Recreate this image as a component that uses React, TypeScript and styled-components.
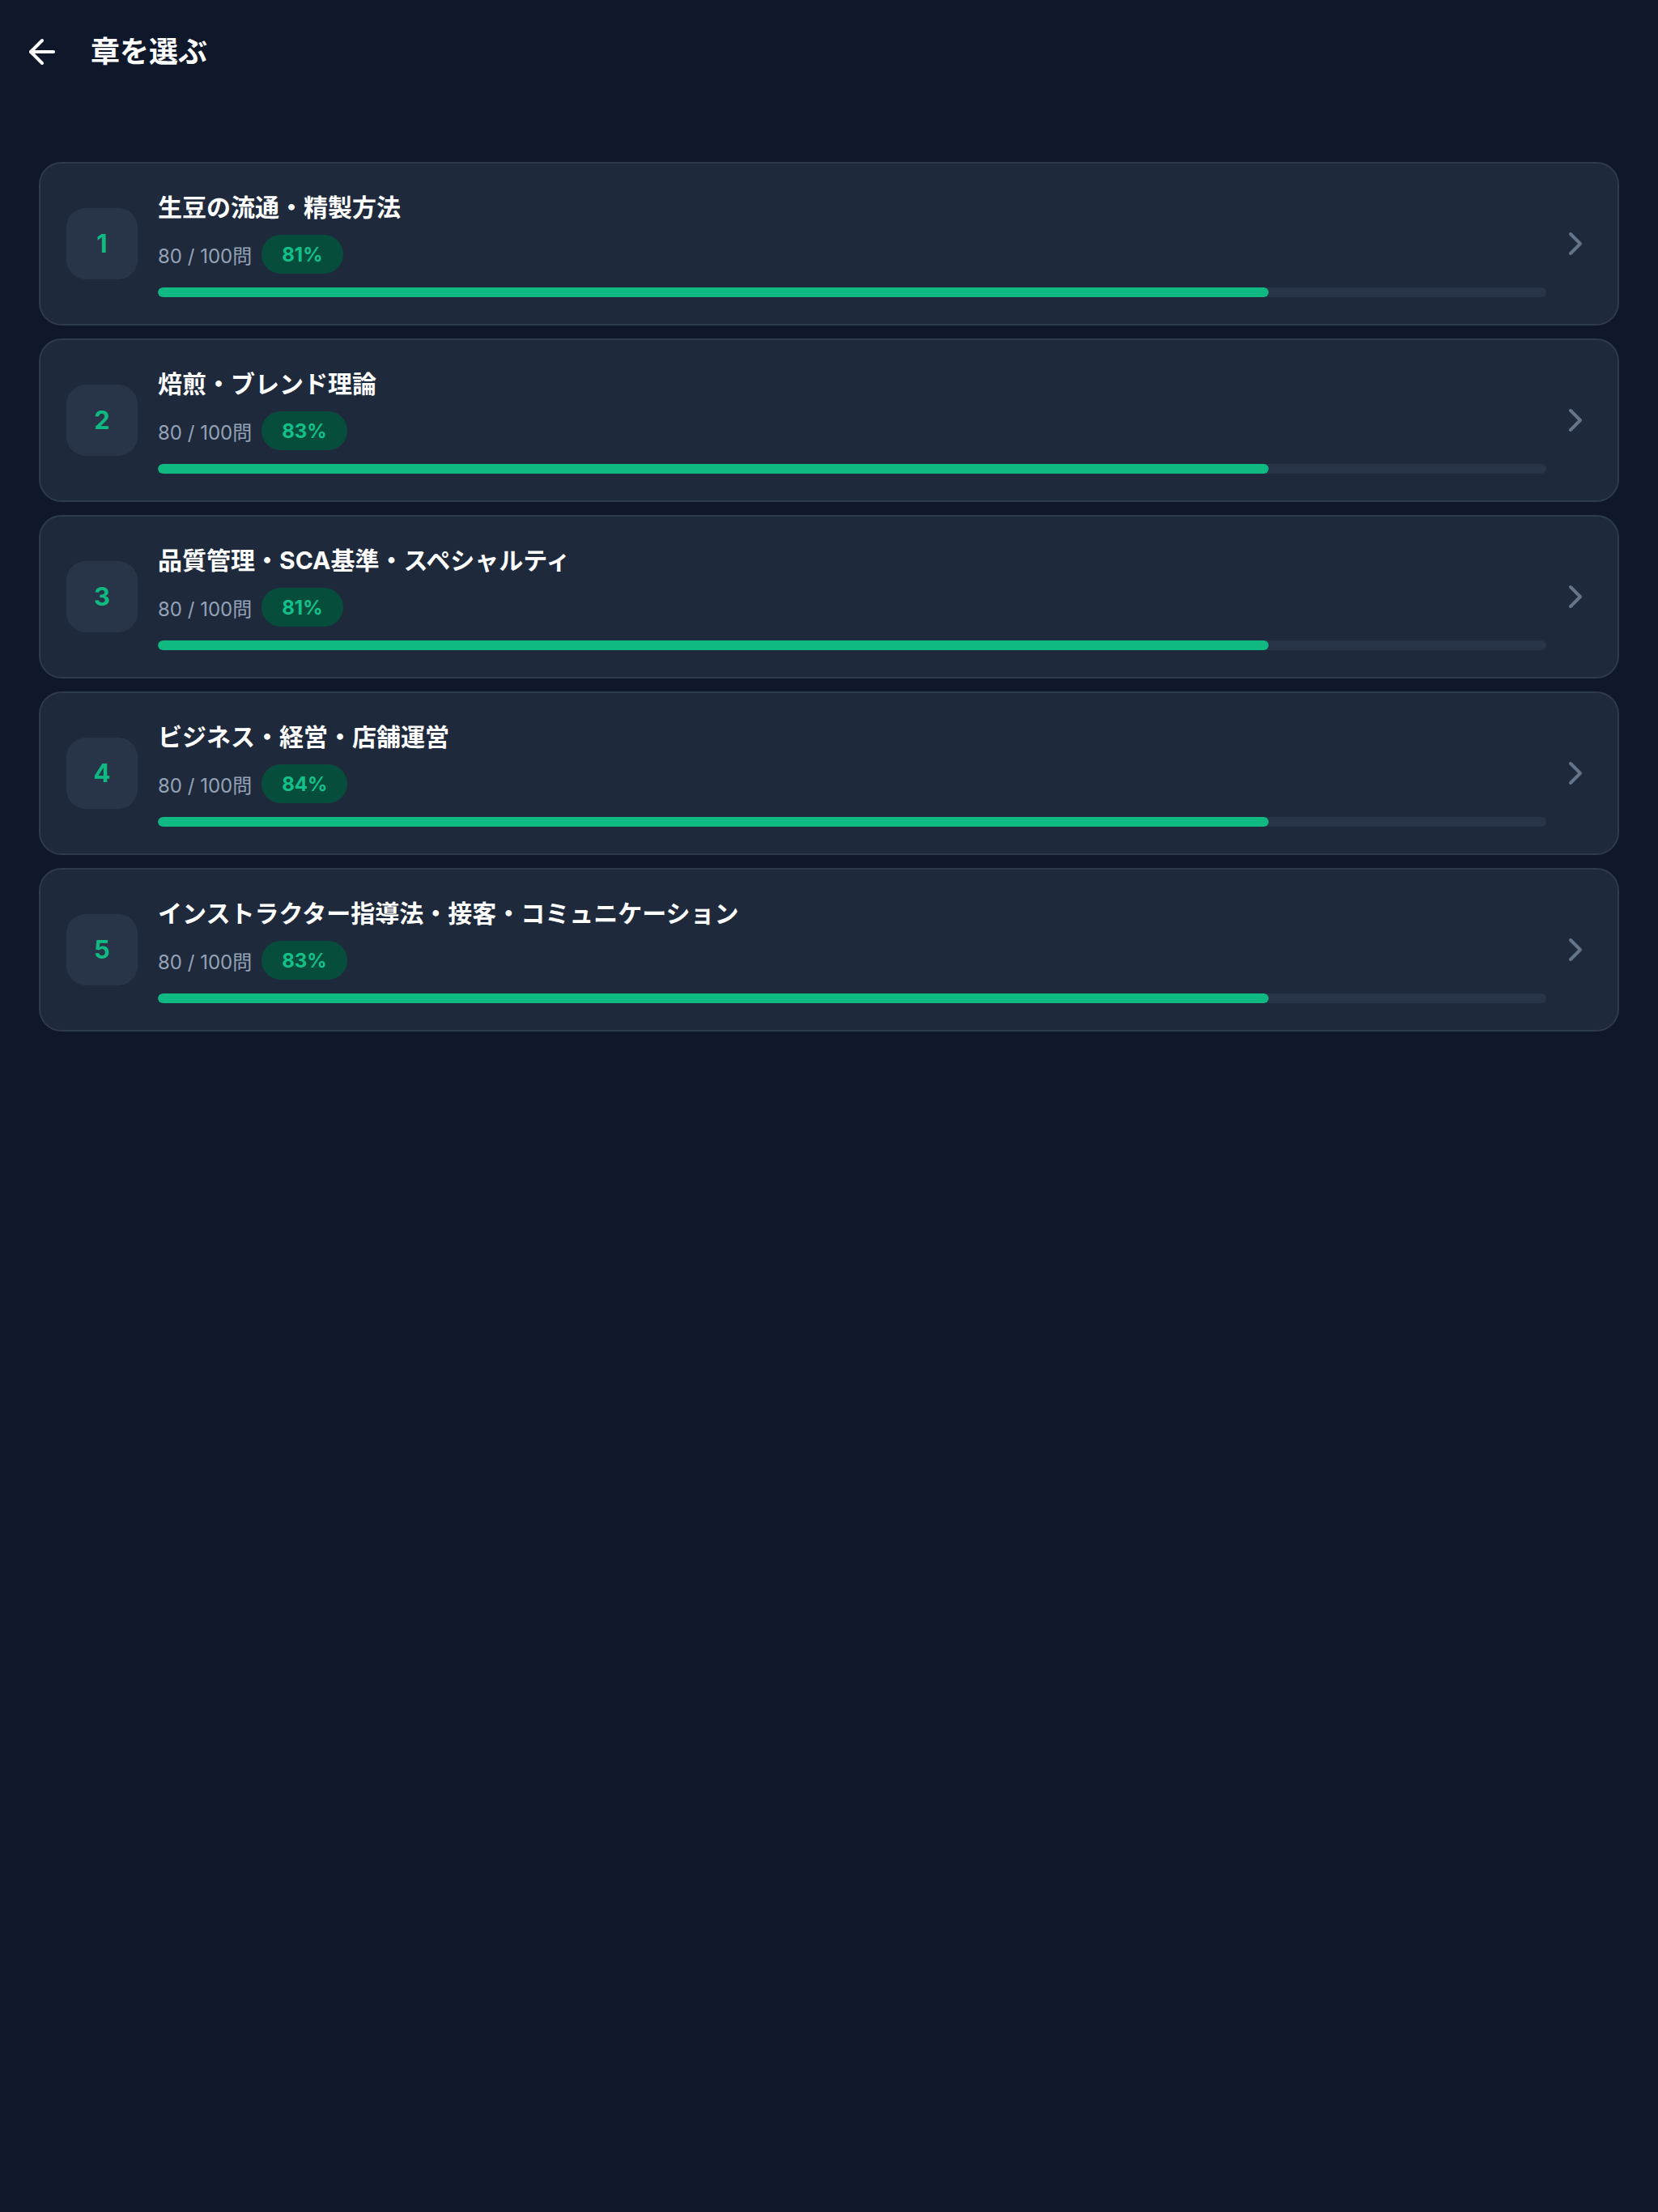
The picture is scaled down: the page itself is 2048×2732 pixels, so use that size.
import styled, { createGlobalStyle } from 'styled-components';
import { ArrowLeft, ChevronRight } from 'lucide-react';

interface Chapter {
  id: number;
  title: string;
  answered: number;
  total: number;
  rate: number;
}

const chapters: Chapter[] = [
  { id: 1, title: '生豆の流通・精製方法', answered: 80, total: 100, rate: 81 },
  { id: 2, title: '焙煎・ブレンド理論', answered: 80, total: 100, rate: 83 },
  { id: 3, title: '品質管理・SCA基準・スペシャルティ', answered: 80, total: 100, rate: 81 },
  { id: 4, title: 'ビジネス・経営・店舗運営', answered: 80, total: 100, rate: 84 },
  { id: 5, title: 'インストラクター指導法・接客・コミュニケーション', answered: 80, total: 100, rate: 83 },
];

const GlobalStyle = createGlobalStyle`
  html, body {
    margin: 0;
    padding: 0;
    background: #0f172a;
  }
  body {
    min-height: 2732px;
    font-family: Inter, "Noto Sans CJK JP", "Noto Sans", sans-serif;
    color: #f8fafc;
  }
  * {
    box-sizing: border-box;
  }
`;

export const Page = styled.div`
  min-height: 2732px;
  background: #0f172a;
`;

export const Header = styled.header`
  display: flex;
  align-items: center;
  gap: 20px;
  padding: 24px 12px;
`;

export const BackButton = styled.button`
  display: flex;
  align-items: center;
  justify-content: center;
  width: 80px;
  height: 80px;
  padding: 16px;
  border: none;
  background: none;
  color: #ffffff;
  cursor: pointer;
`;

export const HeaderTitle = styled.h1`
  margin: 0;
  font-size: 36px;
  font-weight: 700;
  line-height: 1.4;
  color: #ffffff;
`;

export const List = styled.main`
  display: flex;
  flex-direction: column;
  gap: 16px;
  padding: 72px 48px 48px;
`;

export const Card = styled.button`
  display: flex;
  align-items: center;
  width: 100%;
  padding: 32px 28px 33px 32px;
  border: 2px solid #2e3a4d;
  border-radius: 28px;
  background: #1e293b;
  font-family: inherit;
  text-align: left;
  cursor: pointer;
`;

export const NumberBox = styled.div`
  display: flex;
  align-items: center;
  justify-content: center;
  flex-shrink: 0;
  width: 88px;
  height: 88px;
  margin-right: 25px;
  border-radius: 24px;
  background: #283548;
  color: #10b981;
  font-size: 31px;
  font-weight: 700;
`;

export const Body = styled.div`
  display: flex;
  flex-direction: column;
  flex: 1;
  min-width: 0;
`;

export const ChapterTitle = styled.div`
  font-size: 30px;
  font-weight: 700;
  line-height: 45px;
  color: #ffffff;
`;

export const Meta = styled.div`
  display: flex;
  align-items: center;
  gap: 12px;
  margin-top: 11px;
`;

export const Count = styled.span`
  font-size: 24px;
  color: #94a3b8;
`;

export const Badge = styled.span`
  display: inline-flex;
  align-items: center;
  height: 48px;
  padding: 0 25px;
  border-radius: 999px;
  background: #064e3b;
  color: #14c08a;
  font-size: 24px;
  font-weight: 700;
`;

export const Track = styled.div`
  height: 12px;
  margin-top: 17px;
  border-radius: 6px;
  background: #283548;
  overflow: hidden;
`;

export const Fill = styled.div`
  height: 100%;
  border-radius: 6px;
  background: #10b981;
`;

export const Chevron = styled.span`
  display: flex;
  flex-shrink: 0;
  margin-left: 12px;
  color: #64748b;
`;

const ChapterCard = ({ chapter }: { chapter: Chapter }) => (
  <Card>
    <NumberBox>{chapter.id}</NumberBox>
    <Body>
      <ChapterTitle>{chapter.title}</ChapterTitle>
      <Meta>
        <Count>
          {chapter.answered} / {chapter.total}問
        </Count>
        <Badge>{chapter.rate}%</Badge>
      </Meta>
      <Track>
        <Fill style={{ width: `${(chapter.answered / chapter.total) * 100}%` }} />
      </Track>
    </Body>
    <Chevron>
      <ChevronRight size={48} strokeWidth={2} />
    </Chevron>
  </Card>
);

export default function App() {
  return (
    <Page>
      <GlobalStyle />
      <Header>
        <BackButton aria-label="戻る">
          <ArrowLeft size={48} strokeWidth={2} />
        </BackButton>
        <HeaderTitle>章を選ぶ</HeaderTitle>
      </Header>
      <List>
        {chapters.map((c) => (
          <ChapterCard key={c.id} chapter={c} />
        ))}
      </List>
    </Page>
  );
}
